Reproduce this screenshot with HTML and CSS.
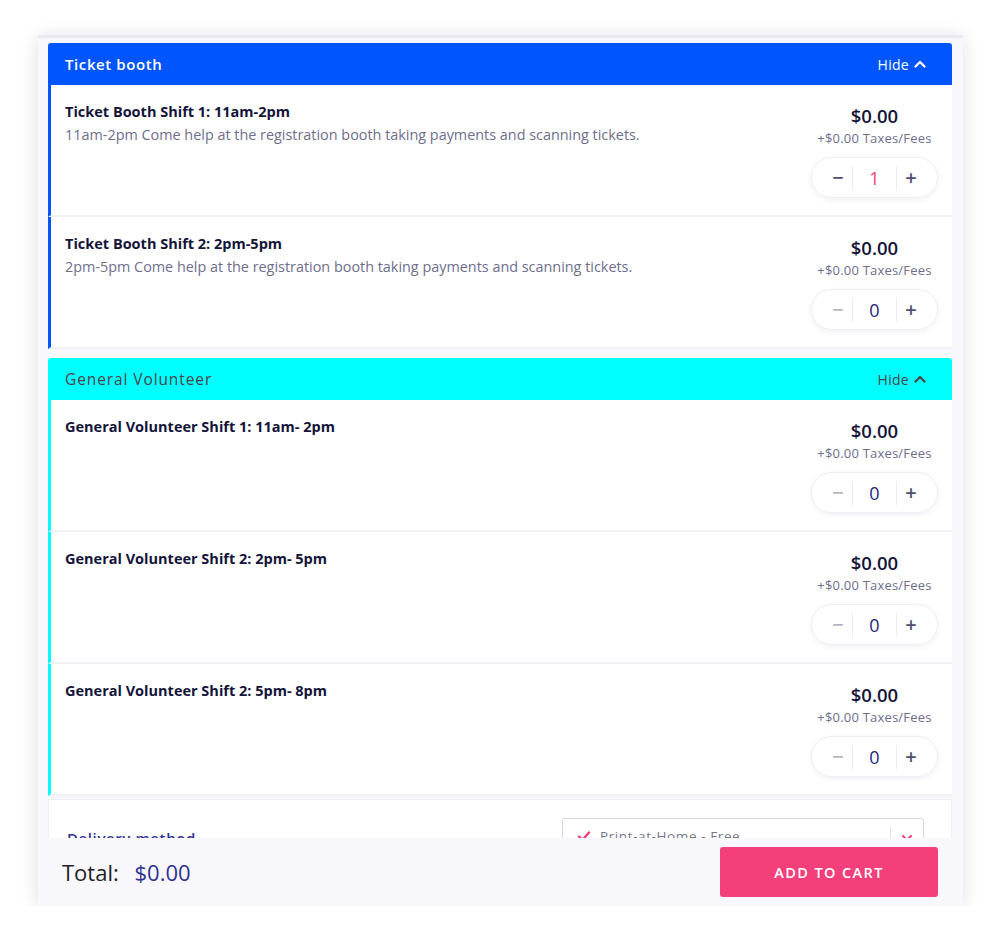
FILE: index.html
```html
<!DOCTYPE html>
<html lang="en">
<head>
  <meta charset="UTF-8">
  <meta name="viewport" content="width=device-width, initial-scale=1.0">
  <title>Tickets</title>
  <link rel="stylesheet" href="styles.css">
</head>
<body>
  <div class="widget">
    <div class="scroll">
      <!-- Ticket booth group -->
      <section class="group group-blue">
        <header class="group-head">
          <h2>Ticket booth</h2>
          <span class="hide">Hide
            <svg width="12" height="12" viewBox="0 0 12 12"><polyline points="1.5,8.5 6,4 10.5,8.5" fill="none" stroke="currentColor" stroke-width="2.2" stroke-linecap="round" stroke-linejoin="round"/></svg>
          </span>
        </header>
        <div class="item">
          <div class="info">
            <h3>Ticket Booth Shift 1: 11am-2pm</h3>
            <p>11am-2pm Come help at the registration booth taking payments and scanning tickets.</p>
          </div>
          <div class="buy">
            <div class="price">$0.00</div>
            <div class="fees">+$0.00 Taxes/Fees</div>
            <div class="stepper">
              <span class="btn minus active">&minus;</span>
              <span class="qty picked">1</span>
              <span class="btn plus">+</span>
            </div>
          </div>
        </div>
        <div class="item">
          <div class="info">
            <h3>Ticket Booth Shift 2: 2pm-5pm</h3>
            <p>2pm-5pm Come help at the registration booth taking payments and scanning tickets.</p>
          </div>
          <div class="buy">
            <div class="price">$0.00</div>
            <div class="fees">+$0.00 Taxes/Fees</div>
            <div class="stepper">
              <span class="btn minus">&minus;</span>
              <span class="qty">0</span>
              <span class="btn plus">+</span>
            </div>
          </div>
        </div>
      </section>

      <!-- General volunteer group -->
      <section class="group group-cyan">
        <header class="group-head">
          <h2>General Volunteer</h2>
          <span class="hide">Hide
            <svg width="12" height="12" viewBox="0 0 12 12"><polyline points="1.5,8.5 6,4 10.5,8.5" fill="none" stroke="currentColor" stroke-width="2.2" stroke-linecap="round" stroke-linejoin="round"/></svg>
          </span>
        </header>
        <div class="item">
          <div class="info">
            <h3>General Volunteer Shift 1: 11am- 2pm</h3>
          </div>
          <div class="buy">
            <div class="price">$0.00</div>
            <div class="fees">+$0.00 Taxes/Fees</div>
            <div class="stepper">
              <span class="btn minus">&minus;</span>
              <span class="qty">0</span>
              <span class="btn plus">+</span>
            </div>
          </div>
        </div>
        <div class="item">
          <div class="info">
            <h3>General Volunteer Shift 2: 2pm- 5pm</h3>
          </div>
          <div class="buy">
            <div class="price">$0.00</div>
            <div class="fees">+$0.00 Taxes/Fees</div>
            <div class="stepper">
              <span class="btn minus">&minus;</span>
              <span class="qty">0</span>
              <span class="btn plus">+</span>
            </div>
          </div>
        </div>
        <div class="item">
          <div class="info">
            <h3>General Volunteer Shift 2: 5pm- 8pm</h3>
          </div>
          <div class="buy">
            <div class="price">$0.00</div>
            <div class="fees">+$0.00 Taxes/Fees</div>
            <div class="stepper">
              <span class="btn minus">&minus;</span>
              <span class="qty">0</span>
              <span class="btn plus">+</span>
            </div>
          </div>
        </div>
      </section>

      <div class="delivery">
        <label>Delivery method</label>
        <div class="select">
          <svg class="check" width="14" height="12" viewBox="0 0 14 12"><polyline points="2,6.5 5.5,10 12,2.5" fill="none" stroke="#f43f7a" stroke-width="2.4" stroke-linecap="round" stroke-linejoin="round"/></svg>
          <span class="choice">Print-at-Home - Free</span>
          <span class="arrow">
            <svg width="12" height="12" viewBox="0 0 12 12"><polyline points="2,4 6,8 10,4" fill="none" stroke="#f43f7a" stroke-width="2" stroke-linecap="round" stroke-linejoin="round"/></svg>
          </span>
        </div>
      </div>
    </div>

    <footer class="footer">
      <div class="total">Total: <span class="amount">$0.00</span></div>
      <button class="cart">ADD TO CART</button>
    </footer>
  </div>
</body>
</html>
```

FILE: styles.css
```css
* {
  box-sizing: border-box;
}
body {
  margin: 0;
  background: #fff;
  font-family: 'Open Sans', 'Noto Sans', sans-serif;
  color: #14143a;
}
.widget {
  width: 925px;
  margin: 35px 0 0 38px;
  background: #f7f7fc;
  border-top: 3px solid #e9e9ef;
  box-shadow: 0 2px 18px rgba(0, 0, 0, 0.13);
}
.scroll {
  height: 800px;
  overflow: hidden;
  padding: 5px 11px 0 10px;
}
.group {
  margin-bottom: 9px;
}
.group-head {
  height: 42px;
  display: flex;
  align-items: center;
  justify-content: space-between;
  padding: 0 26px 0 17px;
  border-radius: 3px 3px 0 0;
}
.group-head h2 {
  margin: 0;
  font-size: 15px;
  font-weight: 600;
  letter-spacing: 0.6px;
}
.hide {
  display: flex;
  align-items: center;
  gap: 5px;
  font-size: 14px;
  letter-spacing: 0.3px;
}
.group-blue .group-head {
  background: #0055ff;
  color: #fff;
}
.group-cyan .group-head {
  background: #00ffff;
  color: #4a4448;
}
.group-cyan .group-head h2 {
  font-weight: 500;
  font-size: 15.5px;
  letter-spacing: 0.9px;
}
.item {
  height: 132px;
  display: flex;
  justify-content: space-between;
  background: #fff;
  border-left: 3px solid;
  border-bottom: 2px solid #f1f1f6;
  padding: 16px 14px 0 14px;
}
.group-blue .item {
  border-left-color: #0055ff;
}
.group-cyan .item {
  border-left-color: #00ffff;
}
.info h3 {
  margin: 0;
  font-size: 14.5px;
  font-weight: 700;
  line-height: 22px;
  color: #14143a;
}
.info p {
  margin: 1px 0 0;
  font-size: 14.4px;
  line-height: 22px;
  color: #6e6e8c;
}
.buy {
  width: 127px;
  display: flex;
  flex-direction: column;
  align-items: center;
  padding-top: 2px;
}
.price {
  font-size: 18.5px;
  font-weight: 600;
  line-height: 26px;
  color: #14143a;
}
.fees {
  font-size: 13px;
  line-height: 18px;
  color: #6e6e8c;
  letter-spacing: 0.2px;
}
.stepper {
  margin-top: 10px;
  height: 41px;
  width: 127px;
  display: flex;
  align-items: center;
  padding: 0 12px;
  border: 1px solid #eeeef3;
  border-radius: 21px;
  box-shadow: 0 2px 6px rgba(20, 20, 60, 0.06);
}
.btn {
  width: 28px;
  text-align: center;
  font-size: 20px;
  font-weight: 600;
  color: #4e4e6c;
}
.minus {
  color: #b4b4c4;
}
.minus.active {
  color: #4e4e6c;
}
.qty {
  flex: 1;
  height: 24px;
  line-height: 24px;
  text-align: center;
  font-size: 18px;
  color: #26267a;
  border-left: 1px solid #ececf2;
  border-right: 1px solid #ececf2;
}
.qty.picked {
  color: #f43f7a;
}
.delivery {
  margin-top: -6px;
  height: 80px;
  background: #fff;
  border: 1px solid #eeeef3;
  display: flex;
  justify-content: space-between;
  padding: 18px 27px 0 18px;
}
.delivery label {
  margin-top: 10px;
  font-size: 15px;
  font-weight: 600;
  letter-spacing: 0.6px;
  color: #2e3192;
}
.select {
  width: 362px;
  height: 40px;
  border: 1px solid #d6d9e2;
  border-radius: 3px;
  display: flex;
  align-items: flex-start;
  padding: 8px 0 0 14px;
}
.check {
  margin-top: 3px;
  margin-right: 9px;
}
.choice {
  flex: 1;
  font-size: 13.5px;
  letter-spacing: 0.6px;
  color: #77778a;
}
.arrow {
  width: 33px;
  height: 30px;
  border-left: 1px solid #e2e4ea;
  display: flex;
  justify-content: center;
  padding-top: 5px;
}
.footer {
  height: 68px;
  display: flex;
  align-items: center;
  justify-content: space-between;
  padding: 0 25px 0 24px;
  background: #f8f8fc;
}
.total {
  font-size: 22px;
  color: #1e1e24;
}
.amount {
  margin-left: 10px;
  color: #2e3192;
}
.cart {
  width: 218px;
  height: 50px;
  border: none;
  border-radius: 3px;
  background: #f43f7a;
  color: #fff;
  font-family: inherit;
  font-size: 14.5px;
  font-weight: 600;
  letter-spacing: 1.4px;
}
```
